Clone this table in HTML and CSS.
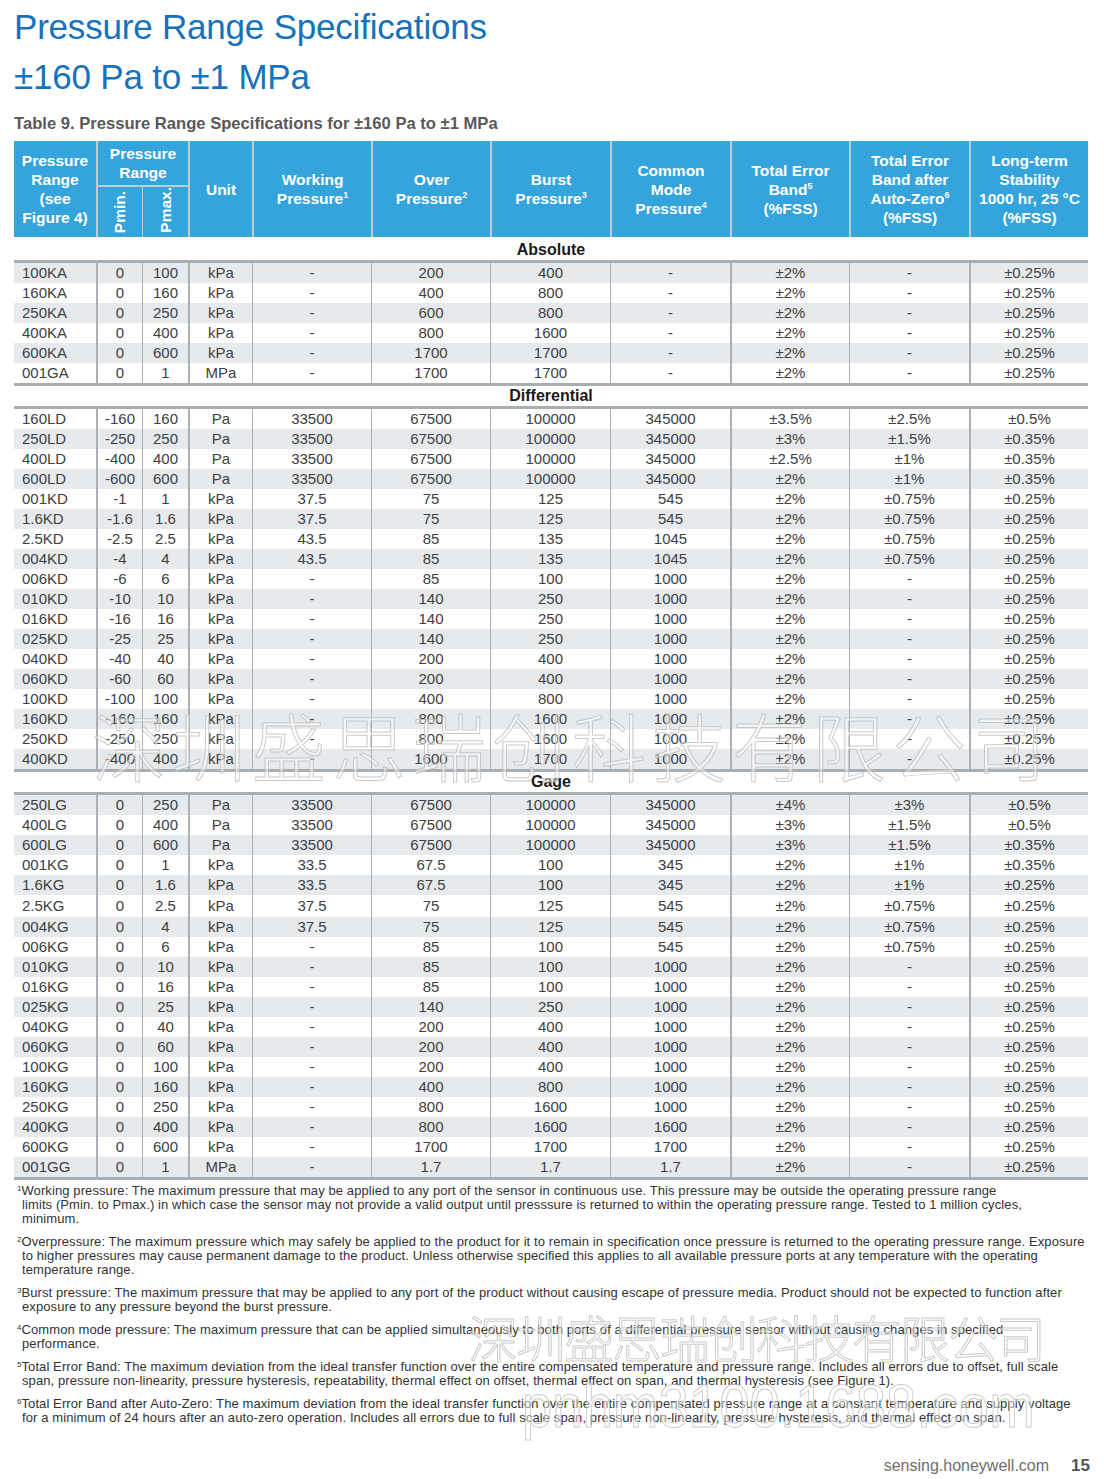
FILE: index.html
```html
<!DOCTYPE html>
<html lang="en">
<head>
<meta charset="utf-8">
<title>Pressure Range Specifications</title>
<link rel="stylesheet" href="styles.css">
</head>
<body>
<div class="page">
  <h1 class="title">Pressure Range Specifications<br>±160 Pa to ±1 MPa</h1>
  <div class="caption">Table 9. Pressure Range Specifications for ±160 Pa to ±1 MPa</div>

  <table class="spec">
    <colgroup>
      <col class="c-range"><col class="c-p"><col class="c-p"><col class="c-unit">
      <col class="c-a"><col class="c-a"><col class="c-b"><col class="c-b">
      <col class="c-a"><col class="c-b"><col class="c-a">
    </colgroup>
    <thead>
      <tr class="hr1">
        <th rowspan="2">Pressure<br>Range<br>(see<br>Figure 4)</th>
        <th colspan="2" class="grp">Pressure<br>Range</th>
        <th rowspan="2">Unit</th>
        <th rowspan="2">Working<br>Pressure<sup>1</sup></th>
        <th rowspan="2">Over<br>Pressure<sup>2</sup></th>
        <th rowspan="2">Burst<br>Pressure<sup>3</sup></th>
        <th rowspan="2">Common<br>Mode<br>Pressure<sup>4</sup></th>
        <th rowspan="2">Total Error<br>Band<sup>5</sup><br>(%FSS)</th>
        <th rowspan="2">Total Error<br>Band after<br>Auto-Zero<sup>6</sup><br>(%FSS)</th>
        <th rowspan="2">Long-term<br>Stability<br>1000 hr, 25 °C<br>(%FSS)</th>
      </tr>
      <tr class="hr2">
        <th class="rot"><span>Pmin.</span></th>
        <th class="rot"><span>Pmax.</span></th>
      </tr>
    </thead>

    <tbody class="label first-label"><tr><td colspan="11">Absolute</td></tr></tbody>
    <tbody class="data">
      <tr class="s"><td>100KA</td><td>0</td><td>100</td><td>kPa</td><td>-</td><td>200</td><td>400</td><td>-</td><td>±2%</td><td>-</td><td>±0.25%</td></tr>
      <tr><td>160KA</td><td>0</td><td>160</td><td>kPa</td><td>-</td><td>400</td><td>800</td><td>-</td><td>±2%</td><td>-</td><td>±0.25%</td></tr>
      <tr class="s"><td>250KA</td><td>0</td><td>250</td><td>kPa</td><td>-</td><td>600</td><td>800</td><td>-</td><td>±2%</td><td>-</td><td>±0.25%</td></tr>
      <tr><td>400KA</td><td>0</td><td>400</td><td>kPa</td><td>-</td><td>800</td><td>1600</td><td>-</td><td>±2%</td><td>-</td><td>±0.25%</td></tr>
      <tr class="s"><td>600KA</td><td>0</td><td>600</td><td>kPa</td><td>-</td><td>1700</td><td>1700</td><td>-</td><td>±2%</td><td>-</td><td>±0.25%</td></tr>
      <tr><td>001GA</td><td>0</td><td>1</td><td>MPa</td><td>-</td><td>1700</td><td>1700</td><td>-</td><td>±2%</td><td>-</td><td>±0.25%</td></tr>
    </tbody>

    <tbody class="label"><tr><td colspan="11">Differential</td></tr></tbody>
    <tbody class="data">
      <tr><td>160LD</td><td>-160</td><td>160</td><td>Pa</td><td>33500</td><td>67500</td><td>100000</td><td>345000</td><td>±3.5%</td><td>±2.5%</td><td>±0.5%</td></tr>
      <tr class="s"><td>250LD</td><td>-250</td><td>250</td><td>Pa</td><td>33500</td><td>67500</td><td>100000</td><td>345000</td><td>±3%</td><td>±1.5%</td><td>±0.35%</td></tr>
      <tr><td>400LD</td><td>-400</td><td>400</td><td>Pa</td><td>33500</td><td>67500</td><td>100000</td><td>345000</td><td>±2.5%</td><td>±1%</td><td>±0.35%</td></tr>
      <tr class="s"><td>600LD</td><td>-600</td><td>600</td><td>Pa</td><td>33500</td><td>67500</td><td>100000</td><td>345000</td><td>±2%</td><td>±1%</td><td>±0.35%</td></tr>
      <tr><td>001KD</td><td>-1</td><td>1</td><td>kPa</td><td>37.5</td><td>75</td><td>125</td><td>545</td><td>±2%</td><td>±0.75%</td><td>±0.25%</td></tr>
      <tr class="s"><td>1.6KD</td><td>-1.6</td><td>1.6</td><td>kPa</td><td>37.5</td><td>75</td><td>125</td><td>545</td><td>±2%</td><td>±0.75%</td><td>±0.25%</td></tr>
      <tr><td>2.5KD</td><td>-2.5</td><td>2.5</td><td>kPa</td><td>43.5</td><td>85</td><td>135</td><td>1045</td><td>±2%</td><td>±0.75%</td><td>±0.25%</td></tr>
      <tr class="s"><td>004KD</td><td>-4</td><td>4</td><td>kPa</td><td>43.5</td><td>85</td><td>135</td><td>1045</td><td>±2%</td><td>±0.75%</td><td>±0.25%</td></tr>
      <tr><td>006KD</td><td>-6</td><td>6</td><td>kPa</td><td>-</td><td>85</td><td>100</td><td>1000</td><td>±2%</td><td>-</td><td>±0.25%</td></tr>
      <tr class="s"><td>010KD</td><td>-10</td><td>10</td><td>kPa</td><td>-</td><td>140</td><td>250</td><td>1000</td><td>±2%</td><td>-</td><td>±0.25%</td></tr>
      <tr><td>016KD</td><td>-16</td><td>16</td><td>kPa</td><td>-</td><td>140</td><td>250</td><td>1000</td><td>±2%</td><td>-</td><td>±0.25%</td></tr>
      <tr class="s"><td>025KD</td><td>-25</td><td>25</td><td>kPa</td><td>-</td><td>140</td><td>250</td><td>1000</td><td>±2%</td><td>-</td><td>±0.25%</td></tr>
      <tr><td>040KD</td><td>-40</td><td>40</td><td>kPa</td><td>-</td><td>200</td><td>400</td><td>1000</td><td>±2%</td><td>-</td><td>±0.25%</td></tr>
      <tr class="s"><td>060KD</td><td>-60</td><td>60</td><td>kPa</td><td>-</td><td>200</td><td>400</td><td>1000</td><td>±2%</td><td>-</td><td>±0.25%</td></tr>
      <tr><td>100KD</td><td>-100</td><td>100</td><td>kPa</td><td>-</td><td>400</td><td>800</td><td>1000</td><td>±2%</td><td>-</td><td>±0.25%</td></tr>
      <tr class="s"><td>160KD</td><td>-160</td><td>160</td><td>kPa</td><td>-</td><td>800</td><td>1600</td><td>1000</td><td>±2%</td><td>-</td><td>±0.25%</td></tr>
      <tr><td>250KD</td><td>-250</td><td>250</td><td>kPa</td><td>-</td><td>800</td><td>1600</td><td>1000</td><td>±2%</td><td>-</td><td>±0.25%</td></tr>
      <tr class="s"><td>400KD</td><td>-400</td><td>400</td><td>kPa</td><td>-</td><td>1600</td><td>1700</td><td>1000</td><td>±2%</td><td>-</td><td>±0.25%</td></tr>
    </tbody>

    <tbody class="label"><tr><td colspan="11">Gage</td></tr></tbody>
    <tbody class="data">
      <tr class="s"><td>250LG</td><td>0</td><td>250</td><td>Pa</td><td>33500</td><td>67500</td><td>100000</td><td>345000</td><td>±4%</td><td>±3%</td><td>±0.5%</td></tr>
      <tr><td>400LG</td><td>0</td><td>400</td><td>Pa</td><td>33500</td><td>67500</td><td>100000</td><td>345000</td><td>±3%</td><td>±1.5%</td><td>±0.5%</td></tr>
      <tr class="s"><td>600LG</td><td>0</td><td>600</td><td>Pa</td><td>33500</td><td>67500</td><td>100000</td><td>345000</td><td>±3%</td><td>±1.5%</td><td>±0.35%</td></tr>
      <tr><td>001KG</td><td>0</td><td>1</td><td>kPa</td><td>33.5</td><td>67.5</td><td>100</td><td>345</td><td>±2%</td><td>±1%</td><td>±0.35%</td></tr>
      <tr class="s"><td>1.6KG</td><td>0</td><td>1.6</td><td>kPa</td><td>33.5</td><td>67.5</td><td>100</td><td>345</td><td>±2%</td><td>±1%</td><td>±0.25%</td></tr>
      <tr class="tall"><td>2.5KG</td><td>0</td><td>2.5</td><td>kPa</td><td>37.5</td><td>75</td><td>125</td><td>545</td><td>±2%</td><td>±0.75%</td><td>±0.25%</td></tr>
      <tr class="s"><td>004KG</td><td>0</td><td>4</td><td>kPa</td><td>37.5</td><td>75</td><td>125</td><td>545</td><td>±2%</td><td>±0.75%</td><td>±0.25%</td></tr>
      <tr><td>006KG</td><td>0</td><td>6</td><td>kPa</td><td>-</td><td>85</td><td>100</td><td>545</td><td>±2%</td><td>±0.75%</td><td>±0.25%</td></tr>
      <tr class="s"><td>010KG</td><td>0</td><td>10</td><td>kPa</td><td>-</td><td>85</td><td>100</td><td>1000</td><td>±2%</td><td>-</td><td>±0.25%</td></tr>
      <tr><td>016KG</td><td>0</td><td>16</td><td>kPa</td><td>-</td><td>85</td><td>100</td><td>1000</td><td>±2%</td><td>-</td><td>±0.25%</td></tr>
      <tr class="s"><td>025KG</td><td>0</td><td>25</td><td>kPa</td><td>-</td><td>140</td><td>250</td><td>1000</td><td>±2%</td><td>-</td><td>±0.25%</td></tr>
      <tr><td>040KG</td><td>0</td><td>40</td><td>kPa</td><td>-</td><td>200</td><td>400</td><td>1000</td><td>±2%</td><td>-</td><td>±0.25%</td></tr>
      <tr class="s"><td>060KG</td><td>0</td><td>60</td><td>kPa</td><td>-</td><td>200</td><td>400</td><td>1000</td><td>±2%</td><td>-</td><td>±0.25%</td></tr>
      <tr><td>100KG</td><td>0</td><td>100</td><td>kPa</td><td>-</td><td>200</td><td>400</td><td>1000</td><td>±2%</td><td>-</td><td>±0.25%</td></tr>
      <tr class="s"><td>160KG</td><td>0</td><td>160</td><td>kPa</td><td>-</td><td>400</td><td>800</td><td>1000</td><td>±2%</td><td>-</td><td>±0.25%</td></tr>
      <tr><td>250KG</td><td>0</td><td>250</td><td>kPa</td><td>-</td><td>800</td><td>1600</td><td>1000</td><td>±2%</td><td>-</td><td>±0.25%</td></tr>
      <tr class="s"><td>400KG</td><td>0</td><td>400</td><td>kPa</td><td>-</td><td>800</td><td>1600</td><td>1600</td><td>±2%</td><td>-</td><td>±0.25%</td></tr>
      <tr><td>600KG</td><td>0</td><td>600</td><td>kPa</td><td>-</td><td>1700</td><td>1700</td><td>1700</td><td>±2%</td><td>-</td><td>±0.25%</td></tr>
      <tr class="s"><td>001GG</td><td>0</td><td>1</td><td>MPa</td><td>-</td><td>1.7</td><td>1.7</td><td>1.7</td><td>±2%</td><td>-</td><td>±0.25%</td></tr>
    </tbody>
  </table>

  <div class="notes">
    <p><sup>1</sup>Working pressure: The maximum pressure that may be applied to any port of the sensor in continuous use. This pressure may be outside the operating pressure range<br>limits (Pmin. to Pmax.) in which case the sensor may not provide a valid output until presssure is returned to within the operating pressure range. Tested to 1 million cycles,<br>minimum.</p>
    <p><sup>2</sup>Overpressure: The maximum pressure which may safely be applied to the product for it to remain in specification once pressure is returned to the operating pressure range. Exposure<br>to higher pressures may cause permanent damage to the product. Unless otherwise specified this applies to all available pressure ports at any temperature with the operating<br>temperature range.</p>
    <p><sup>3</sup>Burst pressure: The maximum pressure that may be applied to any port of the product without causing escape of pressure media. Product should not be expected to function after<br>exposure to any pressure beyond the burst pressure.</p>
    <p><sup>4</sup>Common mode pressure: The maximum pressure that can be applied simultaneously to both ports of a differential pressure sensor without causing changes in specified<br>performance.</p>
    <p><sup>5</sup>Total Error Band: The maximum deviation from the ideal transfer function over the entire compensated temperature and pressure range. Includes all errors due to offset, full scale<br>span, pressure non-linearity, pressure hysteresis, repeatability, thermal effect on offset, thermal effect on span, and thermal hysteresis (see Figure 1).</p>
    <p><sup>6</sup>Total Error Band after Auto-Zero: The maximum deviation from the ideal transfer function over the entire compensated pressure range at a constant temperature and supply voltage<br>for a minimum of 24 hours after an auto-zero operation. Includes all errors due to full scale span, pressure non-linearity, pressure hysteresis, and thermal effect on span.</p>
  </div>

  <div class="footer">
    <span class="site">sensing.honeywell.com</span>
    <span class="pageno">15</span>
  </div>

  <div class="wm wm-table">深圳盛思瑞创科技有限公司</div>
  <div class="wm wm-notes">深圳盛思瑞创科技有限公司</div>
  <div class="wm wm-url">pnhm3100.1688.com</div>
</div>
</body>
</html>
```

FILE: styles.css
```css
html, body {
  margin: 0;
  padding: 0;
  background: #ffffff;
}

body {
  font-family: "Liberation Sans", Arial, Helvetica, sans-serif;
  color: #333333;
}

.page {
  position: relative;
  box-sizing: border-box;
  width: 1104px;
  height: 1479px;
  padding: 0 14px 0 14px;
  display: flex;
  flex-direction: column;
  overflow: hidden;
}

.title {
  margin: 0;
  padding-top: 2px;
  font-size: 35px;
  line-height: 50px;
  font-weight: 400;
  color: #1672bb;
  letter-spacing: -0.2px;
}

.caption {
  margin-top: 12px;
  font-size: 16.6px;
  line-height: 20px;
  font-weight: 700;
  color: #595959;
}

/* ---------- table ---------- */
.spec {
  margin-top: 7px;
  width: 1074px;
  table-layout: fixed;
  border-collapse: separate;
  border-spacing: 0;
}

.c-range { width: 82px; }
.c-p { width: 46px; }
.c-unit { width: 64px; }
.c-a { width: 119px; }
.c-b { width: 120px; }

.spec th {
  background: #35a4dc;
  color: #ffffff;
  font-weight: 700;
  font-size: 15.5px;
  line-height: 19px;
  padding: 0 2px;
  text-align: center;
  vertical-align: middle;
  border-left: 2px solid #bfcbd3;
}

.spec .hr1 th:first-child { border-left: 0; }
.spec .hr1 th { height: 44px; }

.spec .hr2 th {
  height: 46px;
  border-top: 2px solid #bfcbd3;
  vertical-align: bottom;
  padding-bottom: 4px;
}
.spec .hr2 th + th { border-left-width: 1px; }

.spec th sup {
  font-size: 9px;
  line-height: 0;
  vertical-align: 6px;
}

.rot span {
  display: block;
  width: 18px;
  margin: 0 auto;
  writing-mode: vertical-rl;
  transform: rotate(180deg);
  line-height: 18px;
}

.label td {
  text-align: center;
  font-weight: 700;
  font-size: 16px;
  color: #1a1a1a;
  height: 20px;
  line-height: 20px;
  padding: 0;
}
.first-label td { padding-top: 3px; }

.data td {
  height: 20px;
  padding: 0;
  font-size: 15px;
  line-height: 20px;
  color: #404040;
  text-align: center;
  white-space: nowrap;
  border-left: 1px solid #aab0b5;
}
.data td:first-child {
  border-left: 0;
  text-align: left;
  padding-left: 8px;
}
.data td:nth-child(2),
.data td:nth-child(4),
.data td:nth-child(9),
.data td:nth-child(11) {
  border-left-width: 2px;
}

.data tr.s td { background: #e7eaed; }
.data tr.tall td { height: 22px; }

.data tr:first-child td { border-top: 3px solid #a9aeb3; }
.data tr:last-child td { border-bottom: 3px solid #a9aeb3; }

/* ---------- notes ---------- */
.notes {
  margin-top: 4px;
}
.notes p {
  margin: 0 0 9px 0;
  padding-left: 8px;
  text-indent: -5px;
  font-size: 13px;
  line-height: 14px;
  color: #333333;
  white-space: nowrap;
  letter-spacing: 0.1px;
}
.notes sup {
  font-size: 8px;
  line-height: 0;
  vertical-align: 4px;
  letter-spacing: 0;
}

/* ---------- footer ---------- */
.footer {
  margin-top: auto;
  display: flex;
  justify-content: flex-end;
  align-items: baseline;
  gap: 22px;
  padding-bottom: 3px;
}
.site {
  font-size: 16px;
  color: #6e6e6e;
}
.pageno {
  font-size: 17px;
  font-weight: 700;
  color: #555555;
}

/* ---------- watermark overlays ---------- */
.wm {
  position: absolute;
  pointer-events: none;
  white-space: nowrap;
  color: rgba(255, 255, 255, 0.45);
  -webkit-text-stroke: 1px rgba(185, 185, 185, 0.75);
}
.wm-table {
  left: 92px;
  top: 694px;
  font-family: "Noto Sans CJK SC", sans-serif;
  font-weight: 300;
  font-size: 74px;
  line-height: 100px;
  letter-spacing: 6px;
}
.wm-notes {
  left: 468px;
  top: 1296px;
  font-family: "Noto Sans CJK SC", sans-serif;
  font-weight: 300;
  font-size: 50px;
  line-height: 80px;
  letter-spacing: -2px;
}
.wm-url {
  left: 522px;
  top: 1366px;
  font-family: "Liberation Sans", sans-serif;
  font-size: 62px;
  line-height: 80px;
  transform: scaleX(0.88);
  transform-origin: left top;
}
```
